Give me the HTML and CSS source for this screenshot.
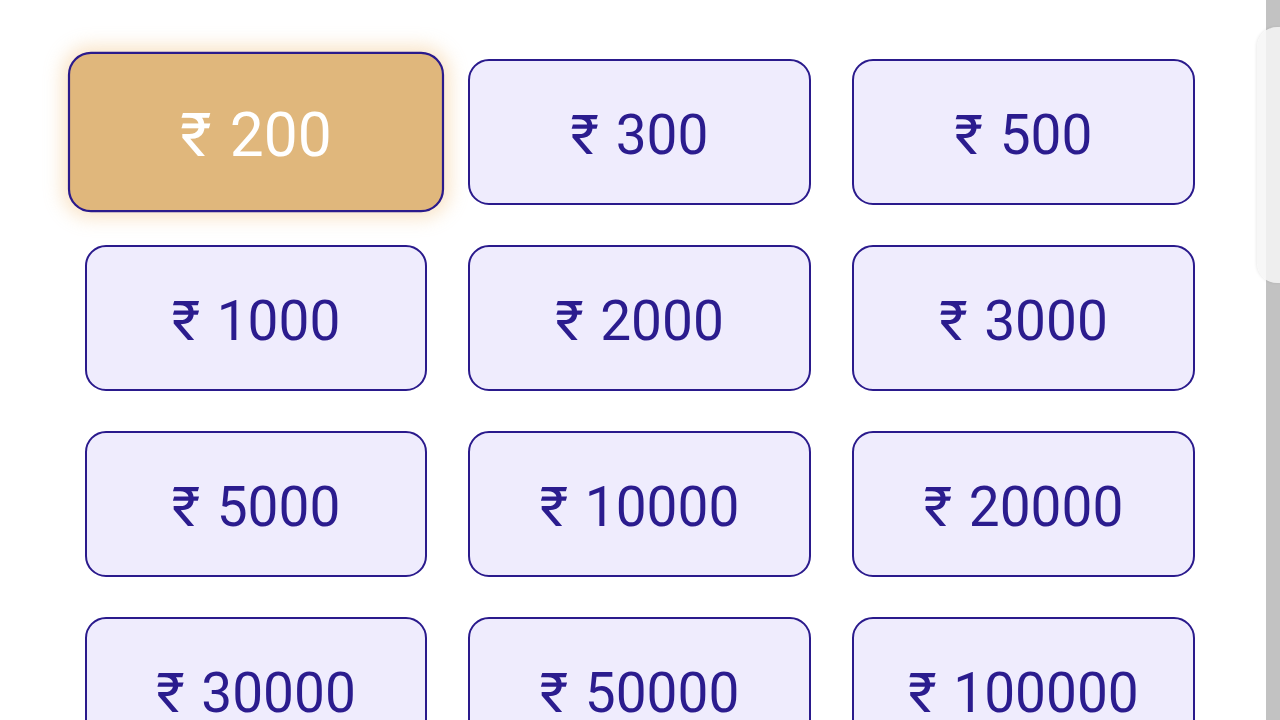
FILE: index.html
```html
<!DOCTYPE html>
<html>
<head>
<meta charset="utf-8">
<link rel="stylesheet" href="styles.css">
</head>
<body>
<div class="screen">
  <main class="content">
    <div class="amount-grid">
      <button class="amount selected">₹ 200</button>
      <button class="amount">₹ 300</button>
      <button class="amount">₹ 500</button>
      <button class="amount">₹ 1000</button>
      <button class="amount">₹ 2000</button>
      <button class="amount">₹ 3000</button>
      <button class="amount">₹ 5000</button>
      <button class="amount">₹ 10000</button>
      <button class="amount">₹ 20000</button>
      <button class="amount">₹ 30000</button>
      <button class="amount">₹ 50000</button>
      <button class="amount">₹ 100000</button>
    </div>
  </main>
  <aside class="side-strip"></aside>
  <div class="side-handle"></div>
</div>
</body>
</html>
```

FILE: styles.css
```css
html, body {
  margin: 0;
  padding: 0;
  width: 1280px;
  height: 720px;
  overflow: hidden;
  background: #ffffff;
  font-family: Roboto, "Noto Sans", "DejaVu Sans", sans-serif;
}

.screen {
  position: relative;
  display: flex;
  width: 1280px;
  height: 720px;
  overflow: hidden;
}

.content {
  flex: 1;
  background: #ffffff;
  padding: 59px 0 0 85px;
  box-sizing: border-box;
}

.amount-grid {
  display: grid;
  grid-template-columns: 342px 343px 343px;
  grid-auto-rows: 146px;
  column-gap: 41px;
  row-gap: 40px;
}

.amount {
  display: flex;
  align-items: center;
  justify-content: center;
  box-sizing: border-box;
  border: 2.5px solid #2a1a8c;
  border-radius: 21px;
  background: #efecfd;
  color: #2b1c8e;
  font-family: Roboto, "Noto Sans", sans-serif;
  font-size: 55px;
  font-weight: 400;
  word-spacing: 3px;
  padding: 5px 0 0 0;
  margin: 0;
  cursor: pointer;
}

.amount.selected {
  background: #e0b77c;
  color: #ffffff;
  transform: scale(1.1);
  box-shadow: 0 0 16px 5px rgba(240, 190, 125, 0.42);
}

.side-strip {
  width: 14px;
  background: #c2c2c2;
}

.side-handle {
  position: absolute;
  left: 1257px;
  top: 27px;
  width: 23px;
  height: 256px;
  border-radius: 20px 0 0 20px;
  background: rgba(246, 246, 246, 0.85);
  box-shadow: -1px 0 3px rgba(0, 0, 0, 0.08);
}
```
